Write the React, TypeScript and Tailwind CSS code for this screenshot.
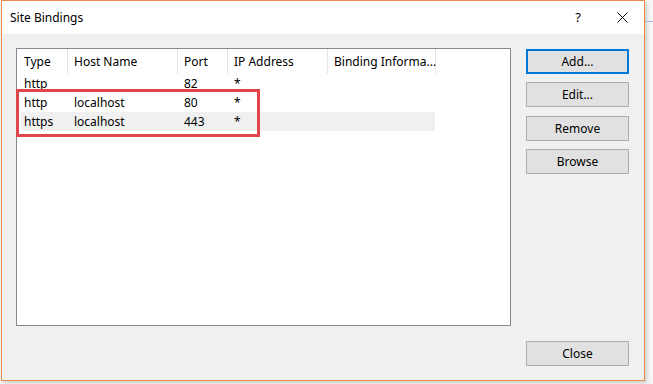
import React from 'react';

interface Column {
  label: string;
  width: string;
  pad: string;
}

interface Binding {
  type: string;
  host: string;
  port: string;
  ip: string;
  selected?: boolean;
}

const columns: Column[] = [
  { label: 'Type', width: 'w-[51px]', pad: 'pl-[7px]' },
  { label: 'Host Name', width: 'w-[110px]', pad: 'pl-[6px]' },
  { label: 'Port', width: 'w-[50px]', pad: 'pl-[6px]' },
  { label: 'IP Address', width: 'w-[100px]', pad: 'pl-[6px]' },
  { label: 'Binding Informa...', width: 'w-[108px]', pad: 'pl-[6px]' },
];

const bindings: Binding[] = [
  { type: 'http', host: '', port: '82', ip: '*' },
  { type: 'http', host: 'localhost', port: '80', ip: '*' },
  { type: 'https', host: 'localhost', port: '443', ip: '*', selected: true },
];

const DialogButton = ({
  label,
  focused = false,
  extra = '',
}: {
  label: string;
  focused?: boolean;
  extra?: string;
}) => (
  <button
    className={`w-[103px] h-[25px] bg-[#e1e1e1] text-black text-[12px] leading-none flex items-center justify-center ${extra} ${
      focused ? 'border-2 border-[#0078d7]' : 'border border-[#adadad]'
    }`}
  >
    {label}
  </button>
);

export default function App() {
  return (
    <div
      className="w-[653px] h-[384px] bg-[#f7f7f7] flex overflow-hidden text-black"
      style={{ fontFamily: '"Noto Sans", "Open Sans", sans-serif' }}
    >
      <div className="ml-[1px] w-[644px] h-[381px] border border-[#e98b4f] flex flex-col bg-[#f0f0f0] shadow-[2px_2px_4px_rgba(0,0,0,0.18)]">
        {/* title bar */}
        <div className="h-[33px] bg-white flex items-center pl-[8px] pr-[16px] text-[12px]">
          <span className="flex-1">Site Bindings</span>
          <span className="w-[10px] text-center mr-[34px] text-[13px]">?</span>
          <svg width="11" height="11" viewBox="0 0 11 11" className="mb-[1px]">
            <path d="M0.5 0.5 L10.5 10.5 M10.5 0.5 L0.5 10.5" stroke="#000" strokeWidth="1" />
          </svg>
        </div>

        {/* body */}
        <div className="flex-1 flex pl-[14px] pr-[14px] pt-[14px] pb-[14px] gap-[15px]">
          <div className="relative w-[495px] h-[278px] bg-white border border-[#828790] text-[12px]">
            <div className="flex h-[25px]">
              {columns.map((c) => (
                <div
                  key={c.label}
                  className={`${c.width} ${c.pad} h-[25px] flex items-center border-r border-[#e5e5e5] whitespace-nowrap`}
                >
                  {c.label}
                </div>
              ))}
            </div>
            <div className="flex flex-col">
              {bindings.map((b, i) => (
                <div
                  key={i}
                  className={`flex h-[19px] items-center ${b.selected ? 'bg-[#f0f0f0] ml-[4px] w-[414px]' : 'w-[418px]'}`}
                >
                  <div className={b.selected ? 'w-[47px] pl-[3px]' : 'w-[51px] pl-[7px]'}>{b.type}</div>
                  <div className="w-[110px] pl-[6px]">{b.host}</div>
                  <div className="w-[50px] pl-[6px]">{b.port}</div>
                  <div className="w-[100px] pl-[6px]">{b.ip}</div>
                </div>
              ))}
            </div>
            {/* annotation box */}
            <div className="absolute left-[-1px] top-[40px] w-[244px] h-[48px] border-[3px] border-[#e0474c]" />
          </div>

          <div className="flex flex-col justify-between pt-[1px]">
            <div className="flex flex-col gap-[8px]">
              <DialogButton label="Add..." focused />
              <DialogButton label="Edit..." />
              <DialogButton label="Remove" extra="mt-[1px]" />
              <DialogButton label="Browse" />
            </div>
            <DialogButton label="Close" />
          </div>
        </div>
      </div>
      <div className="flex-1 pt-[21px]">
        <div className="h-[1px] bg-[#a7bbd9]" />
      </div>
    </div>
  );
}
